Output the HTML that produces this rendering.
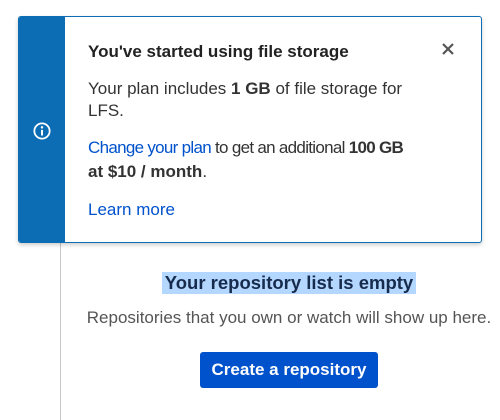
<!DOCTYPE html>
<html><head><style>
body{margin:0;width:500px;height:420px;background:#fff;position:relative;overflow:hidden;font-family:"Liberation Sans",Arial,sans-serif;color:#172b4d}
.vline{position:absolute;left:60px;top:243px;width:1px;height:177px;background:#c8c8c8}
.card{position:absolute;left:18px;top:16px;width:462px;height:225px;border:1px solid #0c6cb4;border-radius:3px;background:#fff;box-shadow:0 2px 4px rgba(0,0,0,.2);overflow:hidden}
.strip{position:absolute;left:0;top:0;width:46px;height:100%;background:#0c6cb4}
.icon{position:absolute;left:14px;top:105px}
.t{position:absolute;left:69px;font-size:17px;line-height:22px;white-space:nowrap;color:#333}
b{font-weight:bold}
a{color:#0052cc;text-decoration:none}
.x{position:absolute;left:422px;top:25px}
.h{position:absolute;left:162px;top:272px;width:254px;height:22px;background:#b3d7ff;font-size:18.5px;font-weight:bold;line-height:22px;text-align:center;color:#172b4d;white-space:nowrap}
.s{position:absolute;left:0;width:500px;padding-left:78px;box-sizing:border-box;top:307px;font-size:17px;line-height:22px;color:#555;text-align:center;white-space:nowrap}
.btn{position:absolute;left:200px;top:352px;width:178px;height:36px;background:#0052cc;border-radius:3px;color:#fff;font-size:17px;font-weight:bold;line-height:36px;text-align:center;white-space:nowrap}
</style></head><body>
<div class="vline"></div>
<div class="card">
<div class="strip"><svg class="icon" width="18" height="18" viewBox="0 0 16 16"><circle cx="8" cy="8" r="6.8" fill="none" stroke="#fff" stroke-width="1.6"/><rect x="7.1" y="7" width="1.8" height="5" fill="#fff"/><circle cx="8" cy="4.8" r="1.1" fill="#fff"/></svg></div>
<div class="t" style="top:24px;font-weight:bold;color:#222">You've started using file storage</div>
<svg class="x" width="14" height="14" viewBox="0 0 14 14"><path d="M2 2L12 12M12 2L2 12" stroke="#555" stroke-width="2.2"/></svg>
<div class="t" style="top:61px">Your plan includes <b>1 GB</b> of file storage for</div>
<div class="t" style="top:83px">LFS.</div>
<div class="t" style="top:120px;letter-spacing:-0.7px"><a>Change your plan</a> to get an additional <b>100 GB</b></div>
<div class="t" style="top:144px"><b>at $10 / month</b>.</div>
<div class="t" style="top:182px"><a>Learn more</a></div>
</div>
<div class="h">Your repository list is empty</div>
<div class="s">Repositories that you own or watch will show up here.</div>
<div class="btn">Create a repository</div>
</body></html>
